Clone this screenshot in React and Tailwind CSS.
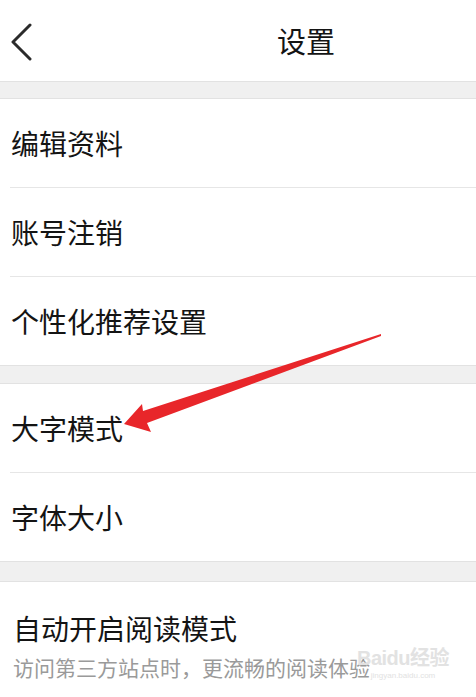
import React from "react";

const font = { fontFamily: '"Noto Sans CJK SC", "Noto Sans", sans-serif' };

const Row = ({ label, divider }) => (
  <>
    <div className="h-[88px] flex items-center pl-[11px] text-[28px] text-[#141414]">
      {label}
    </div>
    {divider && <div className="ml-[10px] h-px bg-[#e6e6e6]" />}
  </>
);

export default function App() {
  return (
    <div className="relative w-[476px] h-[697px] bg-white overflow-hidden" style={font}>
      {/* Header */}
      <div className="h-[81px] flex items-center">
        <svg className="ml-[10px] w-[24px] h-[40px]" viewBox="0 0 24 40" fill="none">
          <path d="M20 4 L3 21 L20 38" stroke="#2b2b2b" strokeWidth="3" strokeLinecap="round" strokeLinejoin="round" />
        </svg>
        <div className="ml-[243px] text-[29px] text-[#141414] leading-none">设置</div>
      </div>

      <div className="h-[18px] bg-[#f0f0f0] border-y border-[#e2e2e2]" />
      <Row label="编辑资料" divider />
      <Row label="账号注销" divider />
      <Row label="个性化推荐设置" />

      <div className="h-[19px] bg-[#f0f0f0] border-y border-[#e2e2e2]" />
      <Row label="大字模式" divider />
      <Row label="字体大小" />

      <div className="h-[21px] bg-[#f0f0f0] border-y border-[#e2e2e2]" />
      <div className="pl-[13px] pt-[24px]">
        <div className="text-[28px] leading-[44px] text-[#141414]">自动开启阅读模式</div>
        <div className="text-[21px] leading-[30px] text-[#9a9a9a] mt-[2px]">
          访问第三方站点时，更流畅的阅读体验
        </div>
      </div>

      {/* watermark */}
      <div className="absolute left-[357px] top-[648px] flex flex-col items-center text-[#e2e2e2] pointer-events-none">
        <div className="text-[20px] leading-none font-bold tracking-tight" style={{ fontFamily: '"Liberation Sans", "Noto Sans CJK SC", sans-serif' }}>
          Baidu经验
        </div>
        <div className="text-[8px] leading-none mt-[4px]" style={{ fontFamily: '"Liberation Sans", sans-serif' }}>
          jingyan.baidu.com
        </div>
      </div>

      {/* red annotation arrow */}
      <svg className="absolute left-0 top-0 pointer-events-none" width="476" height="697" viewBox="0 0 476 697">
        <polygon
          points="124,424 142,404 143,411 381,334 381,336 147,423 151,432"
          fill="#e8262a"
        />
      </svg>
    </div>
  );
}
